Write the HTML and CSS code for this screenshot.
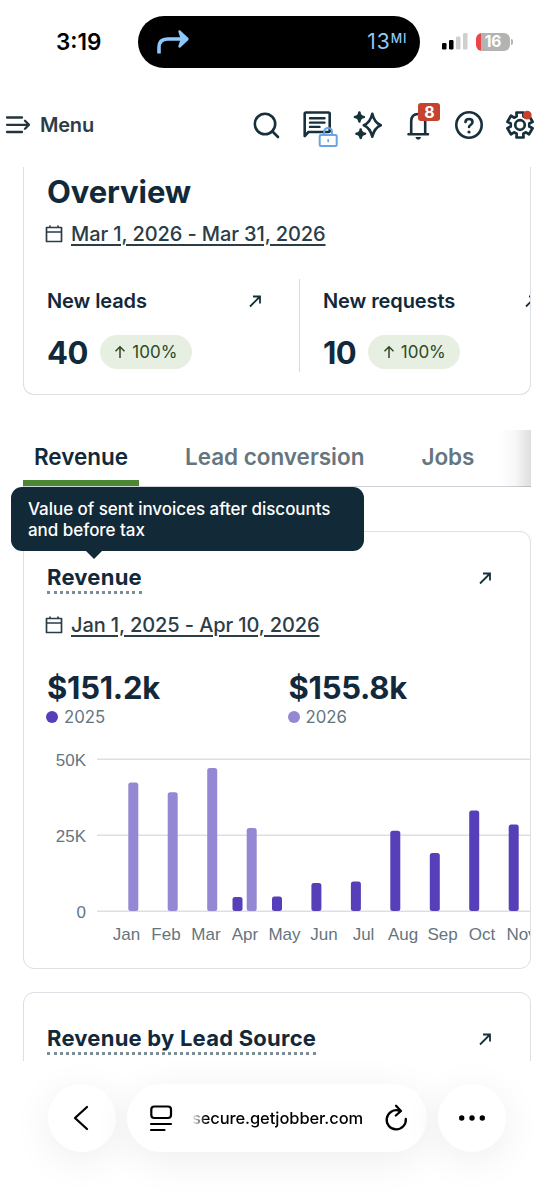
FILE: index.html
```html
<!DOCTYPE html>
<html lang="en">
<head>
  <meta charset="UTF-8" />
  <meta name="viewport" content="width=device-width, initial-scale=1.0"/>
  <title>Insights</title>
  <link rel="stylesheet" href="styles.css">
</head>
<body>

  <div class="status-bar">
    <span class="time">3:19</span>
    <div class="island">
      <svg width="34" height="26" viewBox="0 0 34 26" fill="none" stroke="#8fc7fb" stroke-width="3.6" stroke-linecap="round" stroke-linejoin="round">
        <path d="M3 24.500V18.500Q3 10 11.500 10H28" stroke-linecap="butt"/>
        <path d="M23.500 2.500L31.500 10L23.500 17.500L25.800 10Z" fill="#8fc7fb" stroke-width="2.400"/>
      </svg>
      <span class="distance">13<small>MI</small></span>
    </div>
    <svg class="signal" width="26" height="18" viewBox="0 0 26 18">
      <rect x="0" y="11" width="4.500" height="6.500" rx="1.300" fill="#000"/>
      <rect x="7" y="8" width="4.500" height="9.500" rx="1.300" fill="#000"/>
      <rect x="14" y="4.500" width="4.500" height="13" rx="1.300" fill="#cfcfcf"/>
      <rect x="21" y="1" width="4.500" height="16.500" rx="1.300" fill="#cfcfcf"/>
    </svg>
    <div class="battery">16</div>
    <div class="battery-tip"></div>
  </div>

  <header class="top-nav">
    <svg width="26" height="20" viewBox="0 0 26 20" fill="none" stroke="#22353f" stroke-width="2.300" stroke-linecap="round" stroke-linejoin="round">
      <path d="M3 2.500H18M3 9.800H24.500M3 17H18M21 5.800L25 9.800L21 13.800"/>
    </svg>
    <span class="menu-label">Menu</span>

    <div class="nav-icons">
      <svg class="icon" viewBox="0 0 34 34">
        <circle cx="16" cy="16" r="10.200"/>
        <path d="M23.500 23.500L29 29"/>
      </svg>
      <svg class="icon" viewBox="0 0 34 34">
        <path d="M4.700 28V5.700Q4.700 4.500 6 4.500H28.500Q29.700 4.500 29.700 5.700V22.800Q29.700 24 28.500 24H8.500Z"/>
        <path d="M10 10.300H24.500M10 14.600H24.500M10 18.900H19.500" stroke-width="2.400"/>
        <path d="M24.200 28V23.800A3.900 3.900 0 0 1 32 23.800V28" stroke="#6aa3e6" stroke-width="2"/>
        <rect x="19.700" y="27" width="17" height="11" rx="1" fill="#fff" stroke="#6aa3e6" stroke-width="2"/>
        <path d="M28.200 32V33.300" stroke="#6aa3e6" stroke-width="1.800"/>
      </svg>
      <svg class="icon" viewBox="0 0 34 34">
        <path d="M21.300 5.700Q23.200 14.500 29.800 17.200Q23.200 20 21.300 28.700Q19.300 20 12.800 17.200Q19.300 14.500 21.300 5.700Z"/>
        <path d="M8.400 4.500Q8.700 8.500 12.800 9Q8.700 9.500 8.400 13.500Q8.100 9.500 4 9Q8.100 8.500 8.400 4.500Z" fill="#16303c"/>
        <path d="M9.700 21.500Q10 25.300 14 25.700Q10 26.200 9.700 30Q9.400 26.200 5.500 25.700Q9.400 25.300 9.700 21.500Z" fill="#16303c"/>
      </svg>
      <div class="bell">
        <svg class="icon" viewBox="0 0 34 34">
          <path d="M7.500 26.300H27M10.200 26V13.500Q10.200 6 17.200 6Q24.200 6 24.200 13.500V26"/>
          <path d="M14.300 29H20.200Q19.300 31.800 17.200 31.800Q15.200 31.800 14.300 29Z" fill="#16303c" stroke="none"/>
        </svg>
        <span class="count">8</span>
      </div>
      <svg class="icon" viewBox="0 0 34 34">
        <circle cx="17" cy="17" r="12.700"/>
        <path d="M13.500 14Q13.700 11 17 11Q20.500 11 20.500 13.900Q20.500 15.800 18.600 17Q17 18 17 19"/>
        <circle cx="17" cy="24" r="1.600" fill="#16303c" stroke="none"/>
      </svg>
      <svg class="icon" viewBox="0 0 34 34">
        <g transform="translate(17 17) scale(1.040)">
          <path d="M-3.200-8.400L-3.400-12H3.400L3.200-8.400L5.700-7L8.700-8.900L12.100-3.100L8.900-1.400V1.400L12.100 3.100L8.700 8.900L5.700 7L3.200 8.400L3.400 12H-3.400L-3.200 8.400L-5.700 7L-8.700 8.900L-12.100 3.100L-8.900 1.400V-1.400L-12.100-3.100L-8.700-8.900L-5.700-7Z"/>
          <circle r="4.600"/>
          <circle cx="7" cy="-9.500" r="4.200" fill="#c8412f" stroke="none"/>
        </g>
      </svg>
    </div>
  </header>

  <main>
    <section class="card overview">
      <h1>Overview</h1>
      <div class="date-row">
        <svg class="calendar" viewBox="0 0 20 20">
          <path d="M2.500 3.500H17.500V17.500H2.500ZM2.500 8H17.500M6 1.500V4M14 1.500V4"/>
        </svg>
        <a class="date">Mar 1, 2026 - Mar 31, 2026</a>
      </div>
      <div class="metrics">
        <div class="metric">
          <div class="metric-head">
            <h3>New leads</h3>
            <svg class="arrow" viewBox="0 0 14 14"><path d="M2 12.500L12 2.500M5 2.500H12V9.500"/></svg>
          </div>
          <div class="metric-body">
            <strong>40</strong>
            <span class="badge">
              <svg width="12" height="14" viewBox="0 0 12 14"><path d="M6 13V2M1.500 6.300L6 1.800L10.500 6.300"/></svg>100%
            </span>
          </div>
        </div>
        <div class="metric">
          <div class="metric-head">
            <h3>New requests</h3>
            <svg class="arrow" viewBox="0 0 14 14"><path d="M2 12.500L12 2.500M5 2.500H12V9.500"/></svg>
          </div>
          <div class="metric-body">
            <strong>10</strong>
            <span class="badge">
              <svg width="12" height="14" viewBox="0 0 12 14"><path d="M6 13V2M1.500 6.300L6 1.800L10.500 6.300"/></svg>100%
            </span>
          </div>
        </div>
      </div>
    </section>

    <nav class="tabs">
      <a class="tab active">Revenue</a>
      <a class="tab">Lead conversion</a>
      <a class="tab">Jobs</a>
    </nav>

    <section class="card revenue">
      <div class="tooltip">Value of sent invoices after discounts<br>and before tax</div>
      <div class="card-head">
        <h2>Revenue</h2>
        <svg class="arrow" viewBox="0 0 14 14"><path d="M2 12.500L12 2.500M5 2.500H12V9.500"/></svg>
      </div>
      <div class="date-row">
        <svg class="calendar" viewBox="0 0 20 20">
          <path d="M2.500 3.500H17.500V17.500H2.500ZM2.500 8H17.500M6 1.500V4M14 1.500V4"/>
        </svg>
        <a class="date">Jan 1, 2025 - Apr 10, 2026</a>
      </div>
      <div class="totals">
        <div class="total">
          <strong>$151.2k</strong>
          <span class="legend"><i class="dot"></i>2025</span>
        </div>
        <div class="total">
          <strong>$155.8k</strong>
          <span class="legend"><i class="dot light"></i>2026</span>
        </div>
      </div>
      <svg class="chart" width="483" height="210" viewBox="47 745 483 210">
        <g class="grid">
          <path d="M97 759.200H577M97 835.200H577M97 911.200H577"/>
        </g>
        <g class="bars-2026">
          <rect x="128.300" y="782.500" width="10" height="128.500" rx="2.500"/>
          <rect x="167.700" y="792.200" width="10" height="118.800" rx="2.500"/>
          <rect x="207.200" y="768" width="10" height="143" rx="2.500"/>
          <rect x="246.700" y="828" width="10" height="83" rx="2.500"/>
        </g>
        <g class="bars-2025">
          <rect x="232.500" y="897" width="10" height="14" rx="2.500"/>
          <rect x="272" y="896.500" width="10" height="14.500" rx="2.500"/>
          <rect x="311.400" y="883" width="10" height="28" rx="2.500"/>
          <rect x="350.900" y="881.600" width="10" height="29.400" rx="2.500"/>
          <rect x="390.300" y="830.700" width="10" height="80.300" rx="2.500"/>
          <rect x="429.800" y="853" width="10" height="58" rx="2.500"/>
          <rect x="469.200" y="810.600" width="10" height="100.400" rx="2.500"/>
          <rect x="508.700" y="824.600" width="10" height="86.400" rx="2.500"/>
        </g>
        <g class="y-labels">
          <text x="86" y="766">50K</text>
          <text x="86" y="842">25K</text>
          <text x="86" y="918">0</text>
        </g>
        <g class="x-labels">
          <text x="126.500" y="939.500">Jan</text>
          <text x="166" y="939.500">Feb</text>
          <text x="206" y="939.500">Mar</text>
          <text x="245" y="939.500">Apr</text>
          <text x="284.500" y="939.500">May</text>
          <text x="324" y="939.500">Jun</text>
          <text x="363.500" y="939.500">Jul</text>
          <text x="403" y="939.500">Aug</text>
          <text x="442.500" y="939.500">Sep</text>
          <text x="482" y="939.500">Oct</text>
          <text x="521.500" y="939.500">Nov</text>
        </g>
      </svg>
    </section>

    <section class="card lead-source">
      <div class="card-head">
        <h2>Revenue by Lead Source</h2>
        <svg class="arrow" viewBox="0 0 14 14"><path d="M2 12.500L12 2.500M5 2.500H12V9.500"/></svg>
      </div>
    </section>
  </main>

  <footer class="browser-bar">
    <div class="round-btn">
      <svg width="20" height="28" viewBox="0 0 20 28" fill="none" stroke="#000" stroke-width="2.300" stroke-linecap="round" stroke-linejoin="round"><path d="M15 3L3 14L15 25"/></svg>
    </div>
    <div class="address">
      <svg width="24" height="28" viewBox="0 0 24 28" fill="none" stroke="#000" stroke-width="2.200" stroke-linecap="round">
        <rect x="2.300" y="2.500" width="19.700" height="11.500" rx="3"/>
        <path d="M2 20H22M2 26H15.500"/>
      </svg>
      <span class="url">secure.getjobber.com</span>
      <svg width="24" height="28" viewBox="0 0 24 28" fill="none" stroke="#000" stroke-width="2.300" stroke-linecap="round" stroke-linejoin="round">
        <path d="M21.800 14.800A9.600 9.600 0 1 1 15 6.600M12 1.800L17 7L11.800 11.500"/>
      </svg>
    </div>
    <div class="round-btn">
      <svg width="28" height="8" viewBox="0 0 28 8"><circle cx="3.700" cy="4" r="2.700"/><circle cx="14" cy="4" r="2.700"/><circle cx="24.300" cy="4" r="2.700"/></svg>
    </div>
  </footer>

</body>
</html>
```
FILE: styles.css
```css
* {
  box-sizing: border-box;
}

body {
  margin: 0;
  height: 1200px;
  overflow: hidden;
  font-family: 'Inter', sans-serif;
  background: #fff;
  color: #11293a;
}

svg {
  display: block;
  flex: none;
}

h1, h2, h3 {
  margin: 0;
}

/* Status bar */
.status-bar {
  display: flex;
  align-items: center;
  height: 83px;
  padding-left: 56px;
}

.time {
  width: 82px;
  font-size: 22.5px;
  font-weight: 600;
  color: #000;
}

.island {
  display: flex;
  align-items: center;
  justify-content: space-between;
  width: 282px;
  height: 52px;
  padding: 0 13px 0 18px;
  border-radius: 26px;
  background: #000;
}

.distance {
  display: flex;
  font-size: 21px;
  line-height: 26px;
  letter-spacing: 1px;
  color: #8fc7fb;
}

.distance small {
  font-size: 12.5px;
  line-height: 20px;
  font-weight: 500;
  letter-spacing: 0.7px;
}

.signal {
  margin: 0 8px 1px 22px;
}

.battery {
  width: 34px;
  height: 18px;
  padding-left: 0;
  border-radius: 6px;
  background: linear-gradient(90deg, #eb4547 5px, #b3b3b3 5px);
  color: #fff;
  font-size: 15.5px;
  font-weight: 700;
  line-height: 18px;
  text-align: center;
}

.battery-tip {
  width: 2px;
  height: 6px;
  margin-left: 1px;
  border-radius: 0 2px 2px 0;
  background: #b3b3b3;
}

/* Top nav */
.top-nav {
  display: flex;
  align-items: center;
  height: 84px;
  padding-left: 4px;
}

.menu-label {
  margin-left: 10px;
  font-size: 20px;
  font-weight: 600;
  letter-spacing: -0.2px;
  color: #2b3d47;
}

.nav-icons {
  display: flex;
  gap: 16.8px;
  margin-left: auto;
  margin-right: 17px;
}

.icon {
  width: 34px;
  height: 34px;
  overflow: visible;
  fill: none;
  stroke: #16303c;
  stroke-width: 2.6;
  stroke-linecap: round;
  stroke-linejoin: round;
}

.bell {
  position: relative;
}

.count {
  position: absolute;
  left: 17px;
  top: -5px;
  width: 22px;
  height: 18px;
  border-radius: 3px;
  background: #c5432f;
  color: #fff;
  font-size: 16px;
  font-weight: 700;
  line-height: 18px;
  text-align: center;
}

/* Page content */
main {
  height: 894px;
  padding: 0 23px;
  overflow: hidden;
}

.card {
  position: relative;
  padding-left: 23px;
  border: 1.5px solid #dcdfe3;
  border-radius: 11px;
}

.card h2 {
  height: 32px;
  border-bottom: 3px dotted #7d8d96;
  font-size: 22px;
  font-weight: 700;
  letter-spacing: 0.23px;
  line-height: 31px;
}

.card-head {
  display: flex;
  justify-content: space-between;
  align-items: center;
  height: 32px;
  margin-top: 30px;
  padding-right: 38px;
}

.arrow {
  width: 14px;
  height: 14px;
  fill: none;
  stroke: #16303c;
  stroke-width: 1.8;
}

.overview {
  height: 228px;
  padding-top: 5px;
  overflow: hidden;
  border-top: none;
  border-radius: 0 0 11px 11px;
}

.overview h1 {
  font-size: 31px;
  font-weight: 700;
  letter-spacing: -0.1px;
  line-height: 40px;
}

.date-row {
  display: flex;
  align-items: center;
  gap: 7px;
  height: 26px;
  margin-left: -3px;
}

.overview .date-row {
  margin-top: 9px;
}

.calendar {
  width: 20px;
  height: 20px;
  fill: none;
  stroke: #2b3d47;
  stroke-width: 1.7;
  stroke-linejoin: round;
}

.date {
  font-size: 20px;
  font-weight: 500;
  letter-spacing: -0.1px;
  color: #2b3d47;
  text-decoration: underline;
  text-decoration-thickness: 1.5px;
  text-underline-offset: 3px;
}

.metrics {
  display: flex;
  width: 552px;
  margin-top: 32px;
}

.metric {
  width: 253px;
  height: 93px;
  margin-right: 23px;
  border-right: 1px solid #d5dade;
}

.metric-head {
  display: flex;
  align-items: center;
  justify-content: space-between;
  height: 44px;
  padding-right: 37px;
}

.metric-head h3 {
  font-size: 20px;
  font-weight: 600;
  letter-spacing: -0.1px;
}

.metric-body {
  display: flex;
  align-items: center;
  gap: 12px;
  height: 34px;
  margin-top: 12px;
}

.metric-body strong {
  font-size: 31px;
  letter-spacing: -0.5px;
}

.badge {
  display: flex;
  align-items: center;
  justify-content: center;
  gap: 6px;
  width: 92px;
  height: 34px;
  border-radius: 17px;
  background: #e6efe2;
  color: #2f4a1f;
  font-size: 17px;
}

.badge svg {
  fill: none;
  stroke: #2f4a1f;
  stroke-width: 1.5;
}

/* Tabs */
.tabs {
  position: relative;
  display: flex;
  gap: 35px;
  height: 57px;
  margin-top: 35px;
  border-bottom: 1px solid #cfd4da;
}

.tabs::after {
  content: '';
  position: absolute;
  right: 0;
  top: 0;
  width: 32px;
  height: 57px;
  background: linear-gradient(90deg, rgba(0,0,0,0), rgba(0,0,0,0.03) 50%, rgba(0,0,0,0.13));
}

.tab {
  height: 56px;
  padding: 0 11px;
  color: #66767f;
  font-size: 22.5px;
  font-weight: 600;
  letter-spacing: -0.03px;
  line-height: 54px;
}

.active {
  color: #11293a;
  border-bottom: 6px solid #4b8733;
}

/* Revenue card */
.revenue {
  height: 438px;
  margin: 44px 0 23px;
}

.revenue .date-row {
  margin-top: 18px;
}

.tooltip {
  position: absolute;
  left: -13px;
  top: -45px;
  width: 353px;
  height: 64px;
  padding: 12px 17px;
  border-radius: 11px;
  background: #122a38;
  color: #fff;
  font-size: 17px;
  line-height: 21px;
  font-weight: 500;
  letter-spacing: -0.04px;
  white-space: nowrap;
}

.tooltip::after {
  content: '';
  position: absolute;
  left: 75px;
  top: 64px;
  border: 8px solid transparent;
  border-top-color: #122a38;
  border-bottom: none;
}

.totals {
  display: flex;
  margin-top: 31px;
}

.total {
  width: 242px;
}

.total strong {
  display: block;
  font-size: 31px;
  letter-spacing: -0.25px;
  line-height: 38px;
}

.legend {
  display: flex;
  align-items: center;
  gap: 6px;
  height: 20px;
  margin-left: -1px;
  color: #65757e;
  font-size: 16.8px;
}

.dot {
  width: 12px;
  height: 12px;
  border-radius: 50%;
  background: #573fb9;
}

.dot.light {
  background: #9487d3;
}

.chart {
  margin-top: 18px;
}

.grid path {
  stroke: #dcdfe3;
  stroke-width: 1.5;
}

.bars-2025 {
  fill: #573fb9;
}

.bars-2026 {
  fill: #9487d3;
}

.chart text {
  font-family: 'Liberation Sans', sans-serif;
  font-size: 17px;
  fill: #65757e;
}

.y-labels {
  text-anchor: end;
}

.x-labels {
  text-anchor: middle;
}

.lead-source {
  height: 438px;
}

/* Browser bar */
.browser-bar {
  display: flex;
  align-items: flex-start;
  gap: 11px;
  height: 139px;
  padding: 23px 0 0 48px;
}

.round-btn, .address {
  display: flex;
  align-items: center;
  justify-content: center;
  height: 68px;
  border-radius: 34px;
  background: #fff;
  box-shadow: 0 8px 40px rgba(0, 0, 0, 0.07);
}

.round-btn {
  width: 68px;
}

.address {
  width: 300px;
  justify-content: space-between;
  padding: 0 19px 0 22px;
}

.url {
  margin-right: 2px;
  color: #000;
  font-size: 16.5px;
  font-weight: 500;
  letter-spacing: -0.1px;
  -webkit-mask-image: linear-gradient(90deg, transparent, #000 14px);
  mask-image: linear-gradient(90deg, transparent, #000 14px);
}
```
